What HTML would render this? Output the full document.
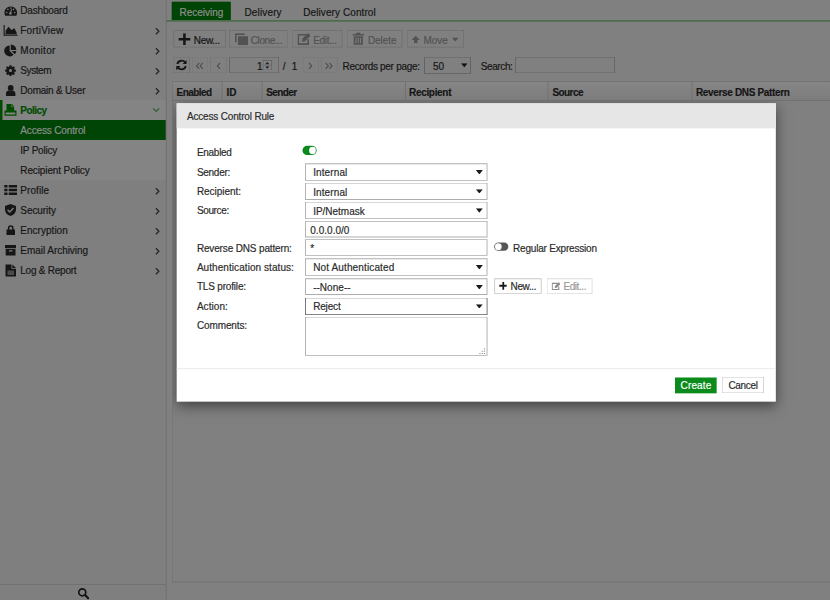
<!DOCTYPE html>
<html lang="en">
<head>
<meta charset="utf-8">
<title>Access Control Rule</title>
<style>
*{box-sizing:border-box;margin:0;padding:0}
html,body{width:830px;height:600px;overflow:hidden;background:#808080}
body{font-family:"Liberation Sans",sans-serif;font-size:12px;color:#161616}
#root{position:absolute;left:0;top:0;width:996px;height:720px;transform:scale(.8333333);transform-origin:0 0;overflow:hidden;background:#808080}
#root div,#root span,#root svg,#root nav,#root header,#root section,#root footer,#root label,#root button,#root a,#root ul,#root li,#root h1{position:absolute;display:block}
button{appearance:none;-webkit-appearance:none;border:0;padding:0;margin:0;background:none;font:inherit;color:inherit;text-align:left;overflow:visible;border-radius:0}
.t{white-space:nowrap;line-height:14.4px;font-weight:normal;font-style:normal;-webkit-text-stroke:.22px currentColor}
.b{font-weight:bold}
.bd{box-shadow:inset 0 0 0 1px #6e6e6e}
#side{background:#7f7f7f}
#side svg{fill:#161616}
.ch{fill:none!important;stroke:#262626;stroke-width:1.25}
.grp{background:#848484}
.pol{color:#004c00}
.pol svg:not(.ch){fill:#004c00!important}
.act{background:#004505;color:#8f8f8f}
.dis{color:#525252}
#modal{background:#fff;box-shadow:0 5px 15px rgba(0,0,0,.5);color:#2b2b2b}
.hd{background:#e6e6e6}
.sel,.inp{background:#fff;box-shadow:inset 0 0 0 1.1px #adadad}
.mb{background:#fff;box-shadow:inset 0 0 0 1.1px #c8c8c8}
.tog{border-radius:6px}
.knob{border-radius:50%;background:#fff}
</style>
</head>
<body>
<div id="root">
<nav id="side" style="left:0;top:0;width:199.2px;height:720px">
<div class="grp" style="left:0;top:120px;width:199.2px;height:95.52px">
</div>
<div style="left:0;top:120px;width:3.12px;height:24px;background:#004c00">
</div>
<div class="act" style="left:0;top:143.76px;width:199.2px;height:23.76px">
</div>
<div class="it" style="left:0;top:0;width:199.2px;height:24px">
<svg viewBox="0 0 20 20" style="left:0;top:0;width:24px;height:24px"><path d="M5.200 15.700A6.300 6.300 0 1 1 16.300 15.700z"/><g fill="#7f7f7f"><circle cx="6.800" cy="12.500" r=".8"/><circle cx="7.900" cy="9.400" r=".8"/><circle cx="10.750" cy="8.100" r=".8"/><circle cx="13.600" cy="9.400" r=".8"/><circle cx="14.700" cy="12.500" r=".8"/><circle cx="10.400" cy="13.400" r="1.300"/><path d="M9.900 13.200 11.300 8.900 12.200 9.200 10.900 13.500z"/></g></svg>
<span class="t" style="left:24.36px;top:5.6px;letter-spacing:-0.21px">Dashboard</span>
</div>
<div class="it" style="left:0;top:24px;width:199.2px;height:24px">
<svg viewBox="0 0 20 20" style="left:0;top:0;width:24px;height:24px"><path d="M3.600 5h1.100v9.600H17.500v1.100H3.600z"/><path d="M5.600 13.900V10.700L8.500 6.800 11.500 9.900 14.400 8.300 16.600 12.600V13.900z"/></svg>
<span class="t" style="left:24.36px;top:5.6px;letter-spacing:0.21px">FortiView</span>
<svg class="ch" viewBox="0 0 4.800 7.400" style="left:186.48px;top:8.76px;width:5.76px;height:8.88px"><path d="M.9 .7 3.900 3.700 .9 6.700"/></svg>
</div>
<div class="it" style="left:0;top:48px;width:199.2px;height:24px">
<svg viewBox="0 0 20 20" style="left:0;top:0;width:24px;height:24px"><path d="M9.700 5.400v5.500l3.900 3.900A5.500 5.500 0 1 1 9.700 5.400z"/><path d="M10.800 4.400a5.500 5.500 0 0 1 5.500 5.500H10.800z"/><path d="M11.600 11h4.700a5.500 5.500 0 0 1-1.500 3.300z"/></svg>
<span class="t" style="left:24.36px;top:5.6px;letter-spacing:0.33px">Monitor</span>
<svg class="ch" viewBox="0 0 4.800 7.400" style="left:186.48px;top:8.76px;width:5.76px;height:8.88px"><path d="M.9 .7 3.900 3.700 .9 6.700"/></svg>
</div>
<div class="it" style="left:0;top:72px;width:199.2px;height:24px">
<svg viewBox="0 0 20 20" style="left:0;top:0;width:24px;height:24px"><path fill-rule="evenodd" d="M9.500 5h2l.35 1.500 1 .4 1.300-.8 1.400 1.400-.8 1.300.4 1 1.500.35v2l-1.500.35-.4 1 .8 1.300-1.400 1.400-1.300-.8-1 .4-.35 1.500h-2l-.35-1.500-1-.4-1.300.8-1.400-1.400.8-1.300-.4-1L4.300 12.150v-2l1.500-.35.4-1-.8-1.300 1.400-1.400 1.300.8 1-.4zM10.500 9.200a1.800 1.800 0 1 0 0 3.600 1.800 1.800 0 0 0 0-3.600z" transform="translate(1.260 .850) scale(.88)"/></svg>
<span class="t" style="left:24.36px;top:5.6px;letter-spacing:-0.5px">System</span>
<svg class="ch" viewBox="0 0 4.800 7.400" style="left:186.48px;top:8.76px;width:5.76px;height:8.88px"><path d="M.9 .7 3.900 3.700 .9 6.700"/></svg>
</div>
<div class="it" style="left:0;top:96px;width:199.2px;height:24px">
<svg viewBox="0 0 20 20" style="left:0;top:0;width:24px;height:24px"><circle cx="10.700" cy="8" r="2.900"/><path d="M6 16v-2.600c0-1.700 1.300-2.700 2.700-2.900.6.500 1.200.8 2 .8s1.400-.3 2-.8c1.400.2 2.700 1.200 2.700 2.900V16z"/></svg>
<span class="t" style="left:24.36px;top:5.6px;letter-spacing:-0.26px">Domain &amp; User</span>
<svg class="ch" viewBox="0 0 4.800 7.400" style="left:186.48px;top:8.76px;width:5.76px;height:8.88px"><path d="M.9 .7 3.900 3.700 .9 6.700"/></svg>
</div>
<div class="it pol" style="left:0;top:120px;width:199.2px;height:24px">
<svg viewBox="0 0 20 20" style="left:0;top:0;width:24px;height:24px"><path d="M6.500 4h5.300l2.300 2.300V11.500H6.500z"/><path d="M11.400 4.500v2.300h2.300" fill="none" stroke="#7a8a7a" stroke-width=".6"/><path fill-rule="evenodd" d="M4.500 10.600h12v5.100h-12zM5.700 12.400v2.100h9.600v-2.100z"/></svg>
<span class="t b" style="left:24.36px;top:5.6px;letter-spacing:-0.62px">Policy</span>
<svg class="ch" viewBox="0 0 7.400 5.200" style="left:183.36px;top:8.88px;width:8.88px;height:6.24px;stroke:#2c5e2c"><path d="M.7 .9 3.700 3.900 6.700 .9"/></svg>
</div>
<div class="it" style="left:0;top:144px;width:199.2px;height:24px">
<span class="t" style="left:24.36px;top:5.6px;letter-spacing:-0.18px;color:#8f8f8f">Access Control</span>
</div>
<div class="it" style="left:0;top:168px;width:199.2px;height:24px">
<span class="t" style="left:24.36px;top:5.6px;letter-spacing:-0.28px">IP Policy</span>
</div>
<div class="it" style="left:0;top:192px;width:199.2px;height:24px">
<span class="t" style="left:24.36px;top:5.6px;letter-spacing:-0.14px">Recipient Policy</span>
</div>
<div class="it" style="left:0;top:216px;width:199.2px;height:24px">
<svg viewBox="0 0 20 20" style="left:0;top:0;width:24px;height:24px"><path d="M4.300 5h3.200v2.600H4.300zM8.700 5H17v2.600H8.700zM4.300 8.700h3.200v2.600H4.300zM8.700 8.700H17v2.600H8.700zM4.300 12.400h3.200V15H4.300zM8.700 12.400H17V15H8.700z"/></svg>
<span class="t" style="left:24.36px;top:5.6px;letter-spacing:0.08px">Profile</span>
<svg class="ch" viewBox="0 0 4.800 7.400" style="left:186.48px;top:8.76px;width:5.76px;height:8.88px"><path d="M.9 .7 3.900 3.700 .9 6.700"/></svg>
</div>
<div class="it" style="left:0;top:240px;width:199.2px;height:24px">
<svg viewBox="0 0 20 20" style="left:0;top:0;width:24px;height:24px"><path fill-rule="evenodd" d="M10.500 4 5 6v3.800c0 3 2.200 5.300 5.500 6.300 3.300-1 5.500-3.300 5.500-6.300V6zM9.700 12.900 7.100 10.300l1-1 1.600 1.600 3.300-3.300 1 1z"/></svg>
<span class="t" style="left:24.36px;top:5.6px;letter-spacing:-0.08px">Security</span>
<svg class="ch" viewBox="0 0 4.800 7.400" style="left:186.48px;top:8.76px;width:5.76px;height:8.88px"><path d="M.9 .7 3.900 3.700 .9 6.700"/></svg>
</div>
<div class="it" style="left:0;top:264px;width:199.2px;height:24px">
<svg viewBox="0 0 20 20" style="left:0;top:0;width:24px;height:24px"><path fill-rule="evenodd" d="M7.900 9.600V8a2.850 2.850 0 0 1 5.700 0v1.600h1.400V15H6.500V9.600zM9.400 9.600h2.700V8a1.350 1.350 0 0 0-2.700 0z"/></svg>
<span class="t" style="left:24.36px;top:5.6px;letter-spacing:0.03px">Encryption</span>
<svg class="ch" viewBox="0 0 4.800 7.400" style="left:186.48px;top:8.76px;width:5.76px;height:8.88px"><path d="M.9 .7 3.900 3.700 .9 6.700"/></svg>
</div>
<div class="it" style="left:0;top:288px;width:199.2px;height:24px">
<svg viewBox="0 0 20 20" style="left:0;top:0;width:24px;height:24px"><path d="M5 5h11v3.200H5z"/><path fill-rule="evenodd" d="M5.700 9h9.800v6.500H5.700zM9 10.300v1.200h3.500v-1.200z"/></svg>
<span class="t" style="left:24.36px;top:5.6px;letter-spacing:-0.05px">Email Archiving</span>
<svg class="ch" viewBox="0 0 4.800 7.400" style="left:186.48px;top:8.76px;width:5.76px;height:8.88px"><path d="M.9 .7 3.900 3.700 .9 6.700"/></svg>
</div>
<div class="it" style="left:0;top:312px;width:199.2px;height:24px">
<svg viewBox="0 0 20 20" style="left:0;top:0;width:24px;height:24px"><path d="M5.500 4.500h6v4.300H16v7.700H5.500z"/><path d="M12.400 4.500 16 8H12.400z"/><path d="M7.500 10.500h6.500v4.500H7.500z" fill="#4a4a4a"/></svg>
<span class="t" style="left:24.36px;top:5.6px;letter-spacing:-0.29px">Log &amp; Report</span>
<svg class="ch" viewBox="0 0 4.800 7.400" style="left:186.48px;top:8.76px;width:5.76px;height:8.88px"><path d="M.9 .7 3.900 3.700 .9 6.700"/></svg>
</div>
<div style="left:0;top:701.16px;width:199.2px;height:0.96px;background:#6e6e6e">
</div>
<svg viewBox="0 0 12 12" style="left:93px;top:705.12px;width:14.4px;height:14.4px"><circle cx="4.800" cy="4.800" r="3.500" fill="none" stroke="#141414" stroke-width="1.700"/><path d="M7.600 7.600 10.700 10.700" stroke="#141414" stroke-width="2.200" stroke-linecap="round"/></svg>
</nav>
<div style="left:199.2px;top:0;width:1.08px;height:720px;background:#6e6e6e">
</div>
<header id="tabs" style="left:200.4px;top:0;width:795.6px;height:26.4px">
<div style="left:6px;top:2.4px;width:70.56px;height:22.32px;background:#004505">
</div>
<span class="t" style="left:15px;top:8px;letter-spacing:-0.02px;color:#909090">Receiving</span>
<span class="t" style="left:93px;top:8px;letter-spacing:0.17px">Delivery</span>
<span class="t" style="left:163.5px;top:8px;letter-spacing:0.11px">Delivery Control</span>
<div style="left:-0.12px;top:24px;width:795.72px;height:2.28px;background:#4a6c4a">
</div>
</header>
<section id="toolbar" style="left:200.4px;top:31.2px;width:795.6px;height:28.8px">
<button class="btn bd" style="left:7.2px;top:4.8px;width:63.24px;height:21.12px">
<span class="t" style="left:24.9px;top:5.6px;letter-spacing:-0.36px">New...</span>
</button>
<svg viewBox="0 0 12 12" style="left:13.8px;top:8.64px;width:14.64px;height:14.16px;fill:#161616"><path d="M4.700 0h2.600v4.700H12v2.600H7.300V12H4.700V7.300H0V4.700h4.700z"/></svg>
<button class="btn bd dis" style="left:75px;top:4.8px;width:70.56px;height:21.12px">
<span class="t" style="left:25.5px;top:5.6px;letter-spacing:-0.47px">Clone...</span>
</button>
<svg viewBox="0 0 13 11.800" style="left:81.6px;top:8.64px;width:15.6px;height:14.16px;fill:#525252"><path d="M0 0h9.700v1.600H1.600V8.800H0z"/><path d="M3 3h10v8.800H3z"/></svg>
<button class="btn bd dis" style="left:150px;top:4.8px;width:60.6px;height:21.12px">
<span class="t" style="left:25.5px;top:5.6px;letter-spacing:-0.37px">Edit...</span>
</button>
<svg viewBox="0 0 13.200 12.400" style="left:156.24px;top:7.92px;width:15.84px;height:14.88px"><path d="M9.300 2.300H.8v9.300H10.700V6.800" fill="none" stroke="#525252" stroke-width="1.600"/><path d="M4.500 9.200 5 6.100 10.600.5 13.200 3.100 7.600 8.700z" fill="#525252"/></svg>
<button class="btn bd dis" style="left:216px;top:4.8px;width:66.36px;height:21.12px">
<span class="t" style="left:25.08px;top:5.6px;letter-spacing:-0.05px">Delete</span>
</button>
<svg viewBox="0 0 11.600 12.200" style="left:222.24px;top:8.16px;width:13.92px;height:14.64px;fill:#525252"><path d="M3.700 0h4.200v1.600h3.700v1.400H0V1.600h3.700z"/><path fill-rule="evenodd" d="M1.200 3.700h9.200v8.500H1.200zM3 5.200v5.500h1V5.200zM5.300 5.200v5.500h1V5.200zM7.600 5.200v5.500h1V5.200z"/></svg>
<button class="btn bd dis" style="left:287.16px;top:4.8px;width:69px;height:21.12px">
<span class="t" style="left:20.64px;top:5.6px;letter-spacing:-0.01px">Move</span>
</button>
<svg viewBox="0 0 8.200 7.400" style="left:294px;top:12px;width:9.84px;height:8.88px;fill:#525252"><path d="M4.100 0 8.200 4.200H5.800V7.400H2.400V4.200H0z"/></svg>
<svg viewBox="0 0 7.200 4.200" style="left:342px;top:14.28px;width:8.64px;height:4.92px;fill:#525252"><path d="M0 0h7.200L3.600 4.200z"/></svg>
</section>
<section id="pager" style="left:200.4px;top:64.8px;width:795.6px;height:26.4px">
<div class="bd" style="left:7.08px;top:3.48px;width:20.16px;height:19.8px">
</div>
<svg viewBox="0 0 11 11.200" style="left:10.2px;top:6.48px;width:13.8px;height:14.04px"><path d="M1.400 4.700A4.300 4.300 0 0 1 9 3.100M9.600 6.500A4.300 4.300 0 0 1 2 8.100" fill="none" stroke="#161616" stroke-width="1.800"/><path d="M10.600 .6v4.100h-4.100zM.4 10.600v-4.100h4.100z" fill="#161616"/></svg>
<div class="bd" style="left:29.28px;top:3.48px;width:20.04px;height:19.8px;box-shadow:inset 0 0 0 1px #767676">
</div>
<svg viewBox="0 0 7.7 6.800" style="left:34.68px;top:9.84px;width:9.24px;height:8.16px;fill:none;stroke:#4a4a4a;stroke-width:1.05"><path d="M3.500.4.600 3.400 3.500 6.400M7.100.4 4.200 3.400 7.100 6.400"/></svg>
<div class="bd" style="left:51.84px;top:3.48px;width:19.92px;height:19.8px;box-shadow:inset 0 0 0 1px #767676">
</div>
<svg viewBox="0 0 4.1 6.800" style="left:59.34px;top:9.84px;width:4.92px;height:8.16px;fill:none;stroke:#4a4a4a;stroke-width:1.05"><path d="M3.500.4.600 3.400 3.500 6.400"/></svg>
<div class="bd" style="left:74.16px;top:3.48px;width:60.24px;height:19.8px;box-shadow:inset 0 0 0 1px #606060">
</div>
<span class="t" style="left:107.88px;top:8px">1</span>
<svg viewBox="0 0 9.600 10.600" style="left:114.72px;top:6.96px;width:11.52px;height:12.72px"><path d="M.4 .4h8.800v9.800H.4z" fill="#848484" stroke="#5c5c5c" stroke-width=".8"/><path d="M.4 5.300h8.800" stroke="#6a6a6a" stroke-width=".7"/><path d="M2.700 4.300 4.800 1.900 6.900 4.300zM2.700 6.400 4.800 8.800 6.900 6.400z" fill="#1c1c1c"/></svg>
<span class="t" style="left:138.96px;top:8px">/</span>
<span class="t" style="left:149.76px;top:8px">1</span>
<div class="bd" style="left:162.12px;top:3.48px;width:20.16px;height:19.8px;box-shadow:inset 0 0 0 1px #767676">
</div>
<svg viewBox="0 0 4.1 6.800" style="left:169.74px;top:9.84px;width:4.92px;height:8.16px;fill:none;stroke:#4a4a4a;stroke-width:1.05"><path d="M.6.400 3.500 3.400.6 6.400"/></svg>
<div class="bd" style="left:184.68px;top:3.48px;width:20.04px;height:19.8px;box-shadow:inset 0 0 0 1px #767676">
</div>
<svg viewBox="0 0 7.7 6.800" style="left:190.08px;top:9.84px;width:9.24px;height:8.16px;fill:none;stroke:#4a4a4a;stroke-width:1.05"><path d="M.6.400 3.500 3.400.6 6.400M4.200.4 7.100 3.400 4.200 6.400"/></svg>
<span class="t" style="left:210.6px;top:8px;letter-spacing:-0.36px">Records per page:</span>
<div class="bd" style="left:308.4px;top:3.12px;width:56.16px;height:20.64px;box-shadow:inset 0 0 0 1px #5e5e5e">
</div>
<span class="t" style="left:319.08px;top:8px;letter-spacing:0.14px">50</span>
<svg viewBox="0 0 7.400 4.400" style="left:352.32px;top:11.28px;width:8.4px;height:4.8px"><path d="M0 0h7.400L3.700 4.400z" fill="#111"/></svg>
<span class="t" style="left:376.5px;top:8px;letter-spacing:-0.47px">Search:</span>
<div class="bd" style="left:417.6px;top:3.48px;width:119.76px;height:19.8px;box-shadow:inset 0 0 0 1px #626262">
</div>
</section>
<section id="grid" class="bd" style="left:206.4px;top:97.44px;width:792px;height:601.68px">
<div style="left:0;top:0;width:792px;height:23.76px;background:linear-gradient(#868686,#7c7c7c);box-shadow:inset 0 0 0 1px #6e6e6e">
</div>
<div style="left:59.82px;top:0.96px;width:0.96px;height:21.84px;background:#6e6e6e">
</div>
<div style="left:107.52px;top:0.96px;width:0.96px;height:21.84px;background:#6e6e6e">
</div>
<div style="left:279.42px;top:0.96px;width:0.96px;height:21.84px;background:#6e6e6e">
</div>
<div style="left:451.02px;top:0.96px;width:0.96px;height:21.84px;background:#6e6e6e">
</div>
<div style="left:624px;top:0.96px;width:0.96px;height:21.84px;background:#6e6e6e">
</div>
<span class="t b" style="left:5.52px;top:6.56px;letter-spacing:-0.7px">Enabled</span>
<span class="t b" style="left:65.52px;top:6.56px">ID</span>
<span class="t b" style="left:113.04px;top:6.56px;letter-spacing:-0.68px">Sender</span>
<span class="t b" style="left:284.4px;top:6.56px;letter-spacing:-0.38px">Recipient</span>
<span class="t b" style="left:456.6px;top:6.56px;letter-spacing:-0.7px">Source</span>
<span class="t b" style="left:628.8px;top:6.56px;letter-spacing:-0.41px">Reverse DNS Pattern</span>
</section>
<div id="clip" style="left:207.48px;top:121.2px;width:788.52px;height:577.2px;overflow:hidden">
<section id="modal" style="left:4.92px;top:2.4px;width:718.8px;height:358.68px">
<div class="hd" style="left:0;top:0;width:718.8px;height:30px">
</div>
<span class="t" style="left:12px;top:9.2px;letter-spacing:-0.21px">Access Control Rule</span>
<span class="t" style="left:23.88px;top:52.4px;letter-spacing:-0.33px">Enabled</span>
<div class="tog" style="left:150.6px;top:51.6px;width:17.4px;height:10.56px;background:#0a8a1c">
<div class="knob" style="left:8.16px;top:1.2px;width:8.04px;height:8.16px">
</div>
</div>
<span class="t" style="left:23.88px;top:76.4px;letter-spacing:-0.32px">Sender:</span>
<div class="sel" style="left:153.6px;top:72.12px;width:219.12px;height:21.12px">
<span class="t" style="left:9.84px;top:4.28px;letter-spacing:0.13px">Internal</span>
<svg viewBox="0 0 7 4.400" style="left:205.44px;top:8.28px;width:8.4px;height:5.28px"><path d="M0 0h7L3.500 4.400z" fill="#1a1a1a"/></svg>
</div>
<span class="t" style="left:23.88px;top:99.2px;letter-spacing:-0.05px">Recipient:</span>
<div class="sel" style="left:153.6px;top:95.4px;width:219.12px;height:21px">
<span class="t" style="left:9.84px;top:5px;letter-spacing:0.13px">Internal</span>
<svg viewBox="0 0 7 4.400" style="left:205.44px;top:8.22px;width:8.4px;height:5.28px"><path d="M0 0h7L3.500 4.400z" fill="#1a1a1a"/></svg>
</div>
<span class="t" style="left:23.88px;top:122px;letter-spacing:-0.42px">Source:</span>
<div class="sel" style="left:153.6px;top:118.92px;width:219.12px;height:20.4px">
<span class="t" style="left:9.84px;top:4.28px;letter-spacing:-0.02px">IP/Netmask</span>
<svg viewBox="0 0 7 4.400" style="left:205.44px;top:7.92px;width:8.4px;height:5.28px"><path d="M0 0h7L3.500 4.400z" fill="#1a1a1a"/></svg>
</div>
<div class="inp" style="left:153.6px;top:141.84px;width:219.12px;height:19.44px">
<span class="t" style="left:6.36px;top:4.16px;letter-spacing:0.03px">0.0.0.0/0</span>
</div>
<span class="t" style="left:23.88px;top:167.6px;letter-spacing:-0.18px">Reverse DNS pattern:</span>
<div class="inp" style="left:153.6px;top:163.68px;width:219.12px;height:19.32px">
<span class="t" style="left:6.36px;top:3.92px">*</span>
</div>
<div class="tog" style="left:380.16px;top:167.04px;width:17.64px;height:10.56px;background:#565656">
<div class="knob" style="left:1.2px;top:1.2px;width:8.04px;height:8.16px">
</div>
</div>
<span class="t" style="left:403.32px;top:167.6px;letter-spacing:-0.24px">Regular Expression</span>
<span class="t" style="left:23.88px;top:190.4px;letter-spacing:0.08px">Authentication status:</span>
<div class="sel" style="left:153.6px;top:186.6px;width:219.12px;height:20.64px">
<span class="t" style="left:9.84px;top:3.8px;letter-spacing:0.16px">Not Authenticated</span>
<svg viewBox="0 0 7 4.400" style="left:205.44px;top:8.04px;width:8.4px;height:5.28px"><path d="M0 0h7L3.500 4.400z" fill="#1a1a1a"/></svg>
</div>
<span class="t" style="left:23.88px;top:213.2px;letter-spacing:-0.21px">TLS profile:</span>
<div class="sel" style="left:153.6px;top:210.12px;width:219.12px;height:20.64px">
<span class="t" style="left:9.84px;top:4.28px;letter-spacing:0.03px">--None--</span>
<svg viewBox="0 0 7 4.400" style="left:205.44px;top:8.04px;width:8.4px;height:5.28px"><path d="M0 0h7L3.500 4.400z" fill="#1a1a1a"/></svg>
</div>
<button class="mb" style="left:380.16px;top:210.12px;width:57.72px;height:19.08px">
<svg viewBox="0 0 12 12" style="left:6px;top:4.32px;width:9.84px;height:9.84px;fill:#1a1a1a"><path d="M4.700 0h2.600v4.700H12v2.600H7.300V12H4.700V7.300H0V4.700h4.700z"/></svg>
<span class="t" style="left:20.16px;top:3.08px;letter-spacing:-0.44px">New...</span>
</button>
<button class="mb" style="left:443.4px;top:210.12px;width:55.56px;height:19.08px;box-shadow:inset 0 0 0 1px #dcdcdc;color:#9a9a9a">
<svg viewBox="0 0 13.200 12.400" style="left:6px;top:3.84px;width:10.56px;height:10.44px"><path d="M9.300 2.300H.8v9.300H10.700V6.800" fill="none" stroke="#8c8c8c" stroke-width="1.700"/><path d="M4.500 9.200 5 6.100 10.600.5 13.200 3.100 7.600 8.700z" fill="#8c8c8c"/></svg>
<span class="t" style="left:20.4px;top:3.08px;letter-spacing:-0.52px">Edit...</span>
</button>
<span class="t" style="left:23.88px;top:237.2px;letter-spacing:0.08px">Action:</span>
<div class="sel" style="left:153.6px;top:233.04px;width:219.12px;height:21.48px;box-shadow:inset 0 0 0 1px #5e5e5e">
<span class="t" style="left:9.84px;top:4.16px;letter-spacing:-0.2px">Reject</span>
<svg viewBox="0 0 7 4.400" style="left:205.44px;top:8.46px;width:8.4px;height:5.28px"><path d="M0 0h7L3.500 4.400z" fill="#1a1a1a"/></svg>
</div>
<span class="t" style="left:23.88px;top:260px;letter-spacing:-0.13px">Comments:</span>
<div class="inp" style="left:153.6px;top:256.68px;width:219.12px;height:46.92px">
<svg viewBox="0 0 5 5" style="left:209.52px;top:37.56px;width:7.2px;height:6.96px"><path d="M4 0h1v1H4zM2 2h1v1H2zM4 2h1v1H4zM0 4h1v1H0zM2 4h1v1H2zM4 4h1v1H4z" fill="#8a8a8a"/></svg>
</div>
<div style="left:0;top:318px;width:718.8px;height:1.08px;background:#e6e6e6">
</div>
<button style="left:597.6px;top:329.52px;width:49.8px;height:18.84px;background:#0b8b1c">
<span class="t" style="left:6.72px;top:2.48px;letter-spacing:0.16px;color:#fff">Create</span>
</button>
<button class="mb" style="left:653.76px;top:328.68px;width:50.52px;height:19.92px">
<span class="t" style="left:8.04px;top:3.32px;letter-spacing:-0.38px">Cancel</span>
</button>
</section>
</div>
</div>
</body>
</html>
